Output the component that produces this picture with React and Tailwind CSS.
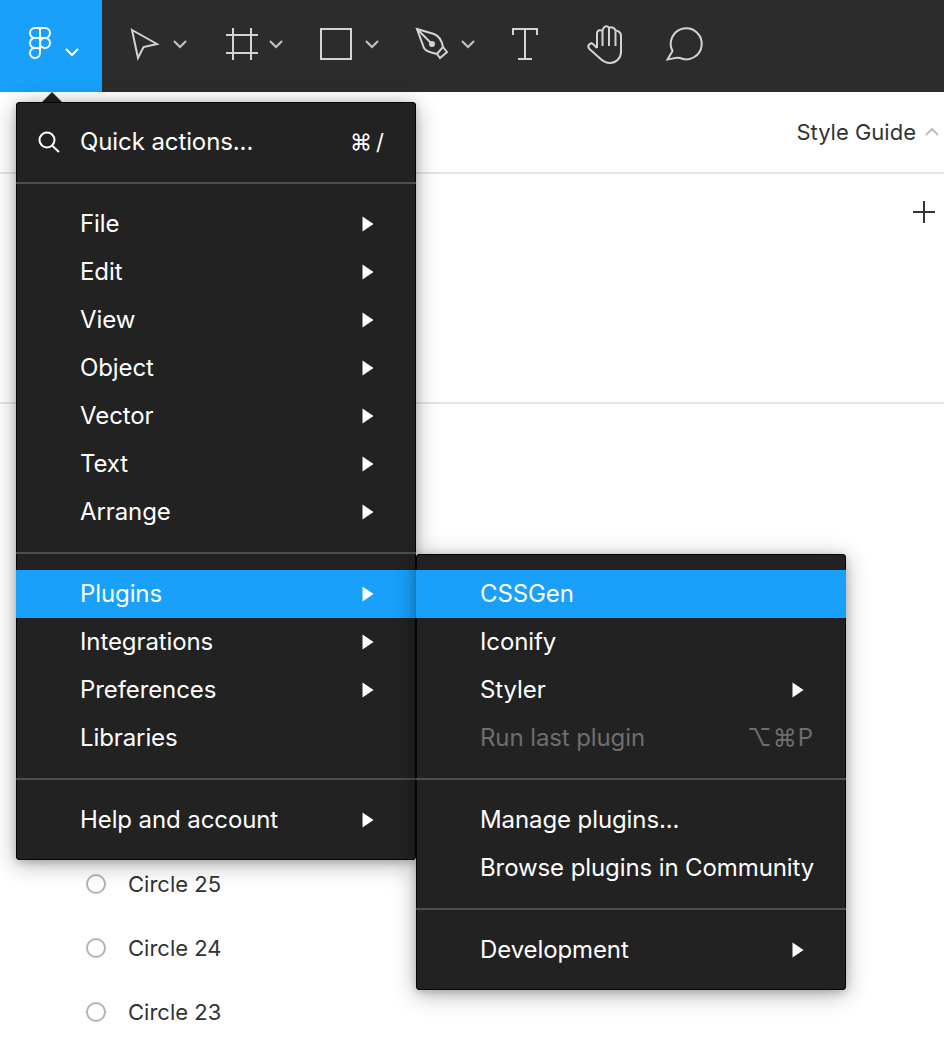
import React from "react";

const font = { fontFamily: "Inter" };

const Chevron = ({ className = "", stroke = "#c4c4c4" }) => (
	<svg width="16" height="10" viewBox="0 0 16 10" fill="none" className={className}>
		<path d="M2 2l6 6 6-6" stroke={stroke} strokeWidth="2" />
	</svg>
);

const Arrow = () => (
	<svg width="12" height="16" viewBox="0 0 12 16" className="shrink-0">
		<path d="M0.5 0.5L11.5 8L0.5 15.5Z" fill="#fff" />
	</svg>
);

const FigmaLogo = () => (
	<svg width="24" height="34" viewBox="0 0 24 34" fill="none" stroke="#fff" strokeWidth="2" className="mb-1">
		<path d="M12 1H7a5 5 0 0 0 0 10h5z" />
		<path d="M12 1h5a5 5 0 0 1 0 10h-5z" />
		<path d="M12 11H7a5 5 0 0 0 0 10h5z" />
		<circle cx="17" cy="16" r="5" />
		<path d="M7 21h5v5a5 5 0 1 1-5-5z" />
	</svg>
);

const Tool = ({ children, chevron, className }) => (
	<div className={`mb-1 flex items-center ${className}`}>
		<svg width="40" height="40" viewBox="0 0 40 40" fill="none" stroke="#d4d4d4" strokeWidth="2">
			{children}
		</svg>
		{chevron}
	</div>
);

const Row = ({ label, arrow, active }) => (
	<div className={`flex h-12 items-center justify-between pl-16 pr-[42px] ${active ? "bg-[#18a0fb]" : ""}`}>
		<span className="whitespace-nowrap text-[24px] tracking-[-0.1px] text-white">{label}</span>
		{arrow && <Arrow />}
	</div>
);

const Sep = () => <div className="my-4 h-[2px] bg-[#4d4d4d]" />;

const Circle = ({ label }) => (
	<div className="flex h-16 items-center pl-[86px]">
		<div className="h-5 w-5 rounded-full border-2 border-[#b3b3b3]" />
		<span className="ml-[22px] text-[22px] text-[#333333]">{label}</span>
	</div>
);

const menuShadow =
	"shadow-[inset_0_0_0_1px_rgba(0,0,0,0.85),0_4px_24px_rgba(0,0,0,0.3),0_2px_8px_rgba(0,0,0,0.2)]";

const App = () => {
	return (
		<div className="relative h-[1052px] w-[944px] overflow-hidden bg-white" style={font}>
			<div className="flex h-[92px] items-center bg-[#2c2c2c]">
				<div className="flex h-full w-[102px] items-center bg-[#18a0fb] pl-7">
					<FigmaLogo />
					<Chevron stroke="#fff" className="ml-3 mt-3" />
				</div>
				<Tool className="ml-[22px]" chevron={<Chevron className="ml-2" />}>
					<path d="M8 6L33 20L19.5 23L14 34Z" />
				</Tool>
				<Tool className="ml-[34px]" chevron={<Chevron className="ml-[6px]" />}>
					<path d="M4 11H36M4 29H36M11 4V36M29 4V36" />
				</Tool>
				<Tool className="ml-8" chevron={<Chevron className="ml-2" />}>
					<rect x="5" y="5" width="30" height="30" />
				</Tool>
				<Tool className="ml-8" chevron={<Chevron className="ml-2" />}>
					<path d="M5 5L22 10C27 12 30 17 31 23L25 30C20 28 15 29 12 24Z" />
					<path d="M31 23L35 28L28 34L25 30" />
					<path d="M5 5L20 20" />
					<circle cx="20" cy="20" r="3" fill="#d4d4d4" stroke="none" />
				</Tool>
				<Tool className="ml-[29px]">
					<path d="M8 11V5H32V11M20 5V35M13 35H27" />
				</Tool>
				<Tool className="ml-10">
					<path d="M12 24V9.5C12 6 17 5 17.5 8C17.5 2 23.5 0 24 5C24 2 30.5 3 30.5 7.5C31 6 36 7 36 12V28C36 34 31 39 25 39C20 39 17 36.5 14 33.5L4.5 25C1.5 22 5 18 8 20L12 24" />
					<path d="M17.5 8V22M24 5V22M30.5 7.5V22" />
				</Tool>
				<Tool className="ml-[39px]">
					<path d="M3.5 35.5L8.5 27A15.5 15.5 0 1 1 16 34C12 33 8 35 3.5 35.5Z" />
				</Tool>
			</div>

			<div className="flex h-[82px] items-center justify-end border-b-2 border-[#e5e5e5] pr-1">
				<span className="text-[22px] text-[#333333]">Style Guide</span>
				<svg width="16" height="10" viewBox="0 0 16 10" fill="none" className="ml-2">
					<path d="M2 8l6-6 6 6" stroke="#bdbdbd" strokeWidth="2" />
				</svg>
			</div>
			<div className="flex h-[230px] justify-end border-b-2 border-[#e5e5e5] pr-[8px] pt-[26px]">
				<svg width="24" height="24" viewBox="0 0 24 24" fill="none" stroke="#333" strokeWidth="2">
					<path d="M1 12H23M12 1V23" />
				</svg>
			</div>
			<div className="pt-[448px]">
				<Circle label="Circle 25" />
				<Circle label="Circle 24" />
				<Circle label="Circle 23" />
			</div>

			{/* menu caret */}
			<div className="absolute left-[42px] top-[92px] h-0 w-0 border-x-[10px] border-b-[10px] border-x-transparent border-b-[#222222]" />

			{/* main menu */}
			<div className={`absolute left-4 top-[102px] w-[400px] rounded-[4px] bg-[#222222] py-4 ${menuShadow}`}>
				<div className="relative flex h-12 items-center justify-between pl-16 pr-8">
					<svg width="24" height="24" viewBox="0 0 24 24" fill="none" stroke="#fff" strokeWidth="2" className="absolute left-5">
						<circle cx="11" cy="10" r="7.5" />
						<path d="M16 15.5L23 22" />
					</svg>
					<span className="text-[24px] tracking-[-0.1px] text-white">Quick actions...</span>
					<span className="flex items-center gap-1 text-[22px] text-white">
						<span>⌘</span>
						<span>/</span>
					</span>
				</div>
				<Sep />
				{["File", "Edit", "View", "Object", "Vector", "Text", "Arrange"].map((label) => (
					<Row key={label} label={label} arrow />
				))}
				<Sep />
				<Row label="Plugins" arrow active />
				<Row label="Integrations" arrow />
				<Row label="Preferences" arrow />
				<Row label="Libraries" />
				<Sep />
				<Row label="Help and account" arrow />
			</div>

			{/* plugins submenu */}
			<div className={`absolute left-[416px] top-[554px] w-[430px] rounded-[4px] bg-[#222222] py-4 ${menuShadow}`}>
				<Row label="CSSGen" active />
				<Row label="Iconify" />
				<Row label="Styler" arrow />
				<div className="flex h-12 items-center justify-between pl-16 pr-8">
					<span className="text-[24px] tracking-[-0.1px] text-[#6e6e6e]">Run last plugin</span>
					<span className="text-[24px] tracking-[1px] text-[#6e6e6e]">⌥⌘P</span>
				</div>
				<Sep />
				<Row label="Manage plugins..." />
				<Row label="Browse plugins in Community" />
				<Sep />
				<Row label="Development" arrow />
			</div>
		</div>
	);
};

export default App;
